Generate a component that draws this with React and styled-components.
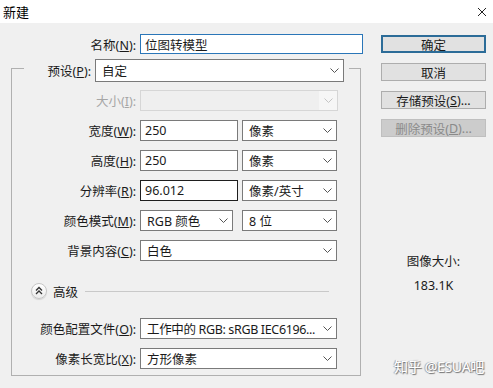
import React from "react";
import styled, { createGlobalStyle } from "styled-components";

const GlobalStyle = createGlobalStyle`
  html, body {
    margin: 0;
    padding: 0;
    background: #f0f0f0;
  }
  * {
    box-sizing: border-box;
  }
`;

const FONT = `"Noto Sans", "Noto Sans CJK SC", sans-serif`;

const Chevron = ({ disabled }) => (
  <svg width="9" height="5" viewBox="0 0 9 5">
    <polyline
      points="0.5,0.5 4.5,4.5 8.5,0.5"
      fill="none"
      stroke={disabled ? "#c4c4c4" : "#555"}
      strokeWidth="1"
    />
  </svg>
);

const Select = ({ width, disabled, tight, children }) => (
  <SelectBox $width={width} $disabled={disabled}>
    <SelectText $tight={tight}>{children}</SelectText>
    <ArrowZone $disabled={disabled}>
      <Chevron disabled={disabled} />
    </ArrowZone>
  </SelectBox>
);

const Row = ({ label, disabled, children, gap = 4 }) => (
  <RowWrap>
    <Label $disabled={disabled}>{label}</Label>
    <Controls $gap={gap}>{children}</Controls>
  </RowWrap>
);

const App = () => {
  return (
    <>
      <GlobalStyle />
      <Window>
        <TitleBar>
          <Title>新建</Title>
          <svg width="10" height="10" viewBox="0 0 10 10">
            <path d="M1 1 L9 9 M9 1 L1 9" stroke="#222" strokeWidth="1" />
          </svg>
        </TitleBar>
        <Main>
          <LeftPane>
            <NameRow>
              <Label>
                名称(<u>N</u>):
              </Label>
              <NameInput>位图转模型</NameInput>
            </NameRow>
            <Group>
              <Legend>
                <LegendLabel>
                  预设(<u>P</u>):
                </LegendLabel>
                <Select width={249}>自定</Select>
              </Legend>
              <Rows>
                <Row
                  disabled
                  label={
                    <>
                      大小(<u>I</u>):
                    </>
                  }
                >
                  <Select width={198} disabled />
                </Row>
                <Row
                  label={
                    <>
                      宽度(<u>W</u>):
                    </>
                  }
                >
                  <TextField $width={98}>250</TextField>
                  <Select width={95}>像素</Select>
                </Row>
                <Row
                  label={
                    <>
                      高度(<u>H</u>):
                    </>
                  }
                >
                  <TextField $width={98}>250</TextField>
                  <Select width={95}>像素</Select>
                </Row>
                <Row
                  label={
                    <>
                      分辨率(<u>R</u>):
                    </>
                  }
                >
                  <TextField $width={98} $active>
                    96.012
                  </TextField>
                  <Select width={95}>像素/英寸</Select>
                </Row>
                <Row
                  gap={9}
                  label={
                    <>
                      颜色模式(<u>M</u>):
                    </>
                  }
                >
                  <Select width={93}>RGB 颜色</Select>
                  <Select width={95}>8 位</Select>
                </Row>
                <Row
                  label={
                    <>
                      背景内容(<u>C</u>):
                    </>
                  }
                >
                  <Select width={197}>白色</Select>
                </Row>
              </Rows>
              <AdvancedRow>
                <RoundToggle>
                  <svg width="16" height="16" viewBox="0 0 16 16">
                    <polyline
                      points="5,7.5 8,4.5 11,7.5"
                      fill="none"
                      stroke="#333"
                      strokeWidth="1.3"
                    />
                    <polyline
                      points="5,11 8,8 11,11"
                      fill="none"
                      stroke="#333"
                      strokeWidth="1.3"
                    />
                  </svg>
                </RoundToggle>
                <AdvancedText>高级</AdvancedText>
                <Divider />
              </AdvancedRow>
              <Rows $top={19}>
                <Row
                  label={
                    <>
                      颜色配置文件(<u>O</u>):
                    </>
                  }
                >
                  <Select width={197} tight>
                    工作中的 RGB: sRGB IEC6196...
                  </Select>
                </Row>
                <Row
                  label={
                    <>
                      像素长宽比(<u>X</u>):
                    </>
                  }
                >
                  <Select width={197}>方形像素</Select>
                </Row>
              </Rows>
            </Group>
          </LeftPane>
          <RightPane>
            <Button $primary>确定</Button>
            <Button>取消</Button>
            <Button>
              存储预设(<u>S</u>)...
            </Button>
            <Button $disabled>
              删除预设(<u>D</u>)...
            </Button>
            <SizeInfo>
              <InfoLine>图像大小:</InfoLine>
              <InfoLine>183.1K</InfoLine>
            </SizeInfo>
          </RightPane>
        </Main>
        <Watermark>知乎 @ESUA吧</Watermark>
      </Window>
    </>
  );
};

export default App;

const Window = styled.div`
  position: relative;
  width: 493px;
  height: 388px;
  overflow: hidden;
  background: #f0f0f0;
  font-family: ${FONT};
  font-size: 12.5px;
  color: #1a1a1a;
`;

const TitleBar = styled.div`
  height: 23px;
  background: #ffffff;
  display: flex;
  align-items: center;
  justify-content: space-between;
  padding: 0 6px 0 3px;
`;

const Title = styled.span`
  font-size: 13px;
  color: #000;
`;

const Main = styled.div`
  display: flex;
`;

const LeftPane = styled.div`
  width: 370px;
  padding-top: 11px;
`;

const NameRow = styled.div`
  display: grid;
  grid-template-columns: 136px 223px;
  column-gap: 4px;
  align-items: center;
  height: 20px;
`;

const Label = styled.span`
  text-align: right;
  white-space: nowrap;
  color: ${(p) => (p.$disabled ? "#a6a6a6" : "#1a1a1a")};
`;

const NameInput = styled.div`
  height: 20px;
  border: 1px solid #2a76b8;
  background: #fff;
  padding-left: 4px;
  display: flex;
  align-items: center;
`;

const Group = styled.fieldset`
  margin: 0 0 0 11px;
  width: 350px;
  padding: 0 0 6px 0;
  border: 1px solid #b0b0b0;
  min-inline-size: 0;
`;

const Legend = styled.legend`
  margin-left: 12px;
  padding: 5px 5px 0 0;
  display: flex;
  align-items: center;
  gap: 4px;
`;

const LegendLabel = styled.span`
  width: 67px;
  text-align: right;
  white-space: nowrap;
`;

const Rows = styled.div`
  display: flex;
  flex-direction: column;
  gap: 9px;
  padding-top: ${(p) => p.$top ?? 8}px;
`;

const RowWrap = styled.div`
  display: grid;
  grid-template-columns: 124px auto;
  column-gap: 4px;
  align-items: center;
  height: 21px;
`;

const Controls = styled.div`
  display: flex;
  gap: ${(p) => p.$gap}px;
`;

const SelectBox = styled.div`
  width: ${(p) => p.$width}px;
  height: ${(p) => (p.$width === 249 ? 23 : 21)}px;
  display: flex;
  align-items: center;
  border: 1px solid ${(p) => (p.$disabled ? "#d6d6d6" : "#7a7a7a")};
  background: ${(p) => (p.$disabled ? "#efefef" : "#ffffff")};
  padding-left: 6px;
`;

const SelectText = styled.span`
  flex: 1;
  white-space: nowrap;
  overflow: hidden;
  letter-spacing: ${(p) => (p.$tight ? "-0.35px" : "normal")};
`;

const ArrowZone = styled.span`
  width: 18px;
  height: 100%;
  display: flex;
  align-items: center;
  justify-content: center;
  background: ${(p) => (p.$disabled ? "#f6f6f6" : "transparent")};
`;

const TextField = styled.div`
  width: ${(p) => p.$width}px;
  height: 21px;
  border: 1px solid ${(p) => (p.$active ? "#1e1e1e" : "#7a7a7a")};
  background: #fff;
  padding-left: 4px;
  display: flex;
  align-items: center;
`;

const AdvancedRow = styled.div`
  display: flex;
  align-items: center;
  height: 16px;
  margin-top: 22px;
  padding-left: 19px;
`;

const RoundToggle = styled.span`
  width: 16px;
  height: 16px;
  border-radius: 50%;
  border: 1px solid #c6c6c6;
  background: linear-gradient(#ffffff, #ececec);
  display: flex;
  align-items: center;
  justify-content: center;
  box-shadow: 0 1px 1px rgba(0, 0, 0, 0.12);
  svg {
    margin: -1px;
  }
`;

const AdvancedText = styled.span`
  margin-left: 6px;
`;

const Divider = styled.span`
  flex: 1;
  height: 1px;
  background: #c9c9c9;
  margin: 0 31px 0 7px;
`;

const RightPane = styled.div`
  flex: 1;
  padding: 12px 0 0 11px;
  display: flex;
  flex-direction: column;
  align-items: flex-start;
  gap: 10px;
`;

const Button = styled.div`
  width: 105px;
  height: 18px;
  display: flex;
  align-items: center;
  justify-content: center;
  white-space: nowrap;
  background: ${(p) => (p.$disabled ? "#cccccc" : "#e1e1e1")};
  border: ${(p) =>
    p.$primary
      ? "2px solid #2c6c98"
      : `1px solid ${p.$disabled ? "#bfbfbf" : "#adadad"}`};
  color: ${(p) => (p.$disabled ? "#8a8a8a" : "#1a1a1a")};
`;

const SizeInfo = styled.div`
  width: 105px;
  margin-top: 106px;
  display: flex;
  flex-direction: column;
  align-items: center;
  gap: 6px;
`;

const InfoLine = styled.span`
  line-height: 18px;
`;

const Watermark = styled.span`
  position: absolute;
  right: 9px;
  bottom: 12px;
  font-size: 14px;
  color: #ffffff;
  letter-spacing: -0.3px;
  text-shadow: 1px 1px 1px #6f6f6f, -1px 0 1px #9a9a9a;
`;
